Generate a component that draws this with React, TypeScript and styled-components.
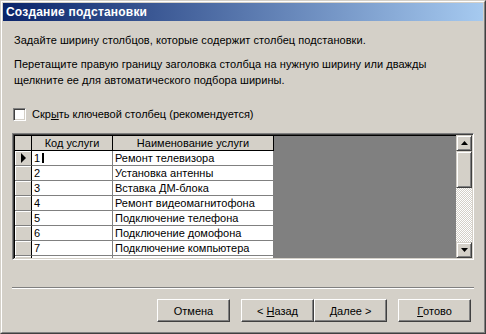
import React from 'react'
import styled, { createGlobalStyle } from 'styled-components'

const rows = [
  { id: '1', name: 'Ремонт телевизора' },
  { id: '2', name: 'Установка антенны' },
  { id: '3', name: 'Вставка ДМ-блока' },
  { id: '4', name: 'Ремонт видеомагнитофона' },
  { id: '5', name: 'Подключение телефона' },
  { id: '6', name: 'Подключение домофона' },
  { id: '7', name: 'Подключение компьютера' },
]

function App() {
  return (
    <>
      <GlobalStyle />
      <Window>
        <Frame>
          <TitleBar>Создание подстановки</TitleBar>
          <Body>
            <Intro>Задайте ширину столбцов, которые содержит столбец подстановки.</Intro>
            <Para>
              Перетащите правую границу заголовка столбца на нужную ширину или дважды
              <br />
              щелкните ее для автоматического подбора ширины.
            </Para>
            <CheckRow>
              <CheckBox />
              <span>
                Скр<u>ы</u>ть ключевой столбец (рекомендуется)
              </span>
            </CheckRow>

            <Grid>
              <Sheet>
                <Row>
                  <Selector $head />
                  <HeadCell $w={81}>Код услуги</HeadCell>
                  <HeadCell $w={161}>Наименование услуги</HeadCell>
                </Row>
                {rows.map((r, i) => (
                  <Row key={r.id}>
                    <Selector>
                      {i === 0 && (
                        <svg width="6" height="10" viewBox="0 0 6 10">
                          <path d="M0 0 L5 5 L0 10 Z" fill="#000" />
                        </svg>
                      )}
                    </Selector>
                    <Cell $w={81}>
                      {r.id}
                      {i === 0 && <Caret />}
                    </Cell>
                    <Cell $w={161}>{r.name}</Cell>
                  </Row>
                ))}
                <Row>
                  <Selector />
                  <Cell $w={81} />
                  <Cell $w={161} />
                </Row>
              </Sheet>
              <ScrollBar>
                <ScrollButton>
                  <svg width="7" height="4" viewBox="0 0 7 4">
                    <path d="M3.5 0 L7 4 L0 4 Z" fill="#000" />
                  </svg>
                </ScrollButton>
                <Thumb />
                <Track />
                <ScrollButton>
                  <svg width="7" height="4" viewBox="0 0 7 4">
                    <path d="M0 0 L7 0 L3.5 4 Z" fill="#000" />
                  </svg>
                </ScrollButton>
              </ScrollBar>
            </Grid>

            <Separator />

            <Buttons>
              <Button>Отмена</Button>
              <Spacer />
              <Button>
                &lt; <u>Н</u>азад
              </Button>
              <Button>
                <u>Д</u>алее &gt;
              </Button>
              <Spacer />
              <Button>
                <u>Г</u>отово
              </Button>
            </Buttons>
          </Body>
        </Frame>
      </Window>
    </>
  )
}

export default App

const GlobalStyle = createGlobalStyle`
  body {
    margin: 0;
    background: #d4d0c8;
    font-family: "Liberation Sans", Arial, sans-serif;
    font-size: 11px;
    color: #000;
  }
`

const Window = styled.div`
  width: 486px;
  height: 334px;
  box-sizing: border-box;
  border: 1px solid;
  border-color: #d4d0c8 #404040 #404040 #d4d0c8;
  background: #d4d0c8;
`

const Frame = styled.div`
  height: 100%;
  box-sizing: border-box;
  border: 1px solid;
  border-color: #fff #808080 #808080 #fff;
  padding: 1px;
  display: flex;
  flex-direction: column;
`

const TitleBar = styled.div`
  height: 18px;
  line-height: 18px;
  padding-left: 3px;
  background: linear-gradient(to right, #0a246a, #a6caf0);
  color: #fff;
  font-weight: bold;
  font-size: 12px;
  letter-spacing: 0.2px;
`

const Body = styled.div`
  padding: 0 9px;
  display: flex;
  flex-direction: column;
`

const Intro = styled.div`
  margin-top: 11px;
  padding-left: 2px;
  line-height: 16px;
  letter-spacing: 0.05px;
`

const Para = styled.div`
  margin-top: 8px;
  padding-left: 2px;
  line-height: 16px;
  letter-spacing: 0.05px;
`

const CheckRow = styled.div`
  margin-top: 18px;
  height: 16px;
  padding-left: 1px;
  display: flex;
  align-items: center;
  gap: 6px;
`

const CheckBox = styled.div`
  width: 13px;
  height: 13px;
  box-sizing: border-box;
  border: 1px solid;
  border-color: #808080 #fff #fff #808080;
  box-shadow: inset 1px 1px #404040, inset -1px -1px #d4d0c8;
  background: #fff;
`

const Grid = styled.div`
  margin-top: 11px;
  height: 127px;
  box-sizing: border-box;
  border: 1px solid;
  border-color: #808080 #fff #fff #808080;
  padding: 1px;
  box-shadow: inset 1px 1px #404040, inset -1px -1px #d4d0c8;
  display: flex;
`

const Sheet = styled.div`
  flex: 1;
  background: #808080;
  overflow: hidden;
  border-top: 1px solid #000;
  border-left: 1px solid #000;
`

const Row = styled.div`
  display: flex;
  height: 15px;
`

const Selector = styled.div<{ $head?: boolean }>`
  width: 14px;
  flex-shrink: 0;
  background: #d4d0c8;
  border-right: 1px solid #000;
  border-bottom: 1px solid ${(p) => (p.$head ? '#000' : '#808080')};
  box-shadow: ${(p) => (p.$head ? 'none' : 'inset 1px 1px #fff')};
  display: flex;
  align-items: center;
  justify-content: center;
  padding-left: 2px;
  box-sizing: content-box;
`

const HeadCell = styled.div<{ $w: number }>`
  width: ${(p) => p.$w}px;
  flex-shrink: 0;
  box-sizing: border-box;
  background: #d4d0c8;
  border-right: 1px solid #000;
  border-bottom: 1px solid #000;
  text-align: center;
  line-height: 14px;
  white-space: nowrap;
`

const Cell = styled.div<{ $w: number }>`
  width: ${(p) => p.$w}px;
  flex-shrink: 0;
  background: #fff;
  border-right: 1px solid #808080;
  border-bottom: 1px solid #808080;
  padding-left: 2px;
  box-sizing: border-box;
  line-height: 14px;
  white-space: nowrap;
  display: flex;
  align-items: center;
`

const Caret = styled.span`
  display: inline-block;
  width: 2px;
  height: 10px;
  background: #000;
  margin-left: 2px;
`

const ScrollBar = styled.div`
  width: 16px;
  display: flex;
  flex-direction: column;
`

const ScrollButton = styled.div`
  height: 16px;
  box-sizing: border-box;
  border: 1px solid;
  border-color: #d4d0c8 #404040 #404040 #d4d0c8;
  box-shadow: inset 1px 1px #fff, inset -1px -1px #808080;
  background: #d4d0c8;
  display: flex;
  align-items: center;
  justify-content: center;
`

const Thumb = styled(ScrollButton)`
  height: 37px;
`

const Track = styled.div`
  flex: 1;
  background: repeating-conic-gradient(#d4d0c8 0 25%, #fff 0 50%) 0 0 / 2px 2px;
`

const Separator = styled.div`
  margin-top: 27px;
  height: 2px;
  border-top: 1px solid #808080;
  border-bottom: 1px solid #fff;
  box-sizing: border-box;
`

const Buttons = styled.div`
  margin-top: 10px;
  padding-right: 3px;
  display: flex;
  justify-content: flex-end;
`

const Spacer = styled.div`
  width: 11px;
`

const Button = styled.div`
  width: 73px;
  height: 23px;
  box-sizing: border-box;
  border: 1px solid;
  border-color: #fff #404040 #404040 #fff;
  box-shadow: inset -1px -1px #808080;
  background: #d4d0c8;
  display: flex;
  align-items: center;
  justify-content: center;
  white-space: pre;
`
